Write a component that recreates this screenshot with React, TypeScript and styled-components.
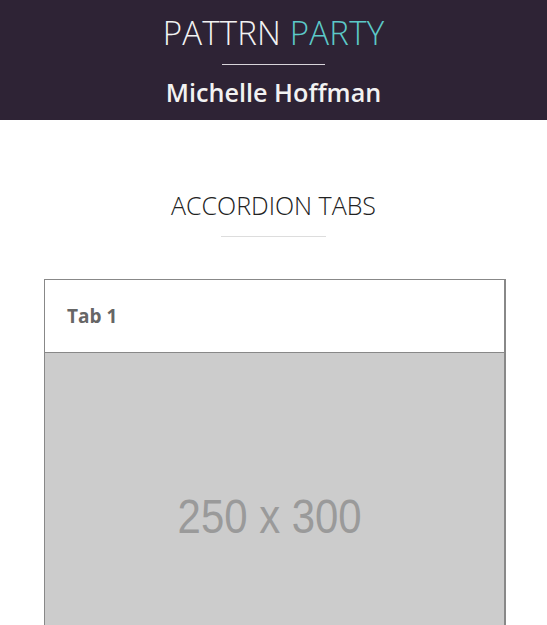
import React from "react";
import styled, { createGlobalStyle } from "styled-components";

const GlobalStyle = createGlobalStyle`
  html, body {
    margin: 0;
    padding: 0;
    background: #fff;
    font-family: "Open Sans", "Noto Sans", sans-serif;
  }
`;

const Header = styled.header`
  background: #2e2335;
  height: 120px;
  display: flex;
  flex-direction: column;
  align-items: center;
  box-sizing: border-box;
  padding-top: 11px;
`;

const SiteTitle = styled.h1`
  margin: 0;
  font-weight: 300;
  font-size: 33px;
  line-height: 44px;
  color: #f2f2f2;
  letter-spacing: 0.2px;

  span {
    color: #5cc9c8;
  }
`;

const Rule = styled.hr<{ $color: string; $width: number; $gap: number }>`
  border: 0;
  height: 1px;
  background: ${({ $color }) => $color};
  width: ${({ $width }) => $width}px;
  margin: ${({ $gap }) => $gap}px 0 0;
`;

const Author = styled.h2`
  margin: 11px 0 0;
  font-weight: 600;
  font-size: 25.2px;
  line-height: 32px;
  color: #f2f2f2;
`;

const Main = styled.main`
  display: flex;
  flex-direction: column;
  align-items: center;
  padding-top: 68px;
`;

const SectionTitle = styled.h3`
  margin: 0;
  font-weight: 300;
  font-size: 25px;
  line-height: 34px;
  color: #222;
`;

const Accordion = styled.div`
  align-self: flex-start;
  margin: 42px 0 0 44px;
  width: 462px;
  border: 1px solid #888;
  border-right-width: 2px;
  box-sizing: border-box;
`;

const TabHeader = styled.div`
  height: 72px;
  display: flex;
  align-items: center;
  padding-left: 22px;
  border-bottom: 1px solid #888;
  font-weight: 700;
  font-size: 19px;
  color: #666;
`;

const Placeholder = styled.div`
  height: 330px;
  background: #cccccc;
  display: flex;
  justify-content: center;
  padding: 139px 10px 0 0;
  box-sizing: border-box;
`;

const PlaceholderText = styled.span`
  font-family: "Liberation Sans", Arial, sans-serif;
  font-size: 49px;
  line-height: 49px;
  color: #9a9a9a;
  transform: scaleX(0.855);
  white-space: nowrap;
  height: 49px;
`;

export default function App() {
  return (
    <>
      <GlobalStyle />
      <Header>
        <SiteTitle>
          PATTRN <span>PARTY</span>
        </SiteTitle>
        <Rule $color="#d8d4da" $width={103} $gap={9} />
        <Author>Michelle Hoffman</Author>
      </Header>
      <Main>
        <SectionTitle>ACCORDION TABS</SectionTitle>
        <Rule $color="#ddd" $width={105} $gap={14} />
        <Accordion>
          <TabHeader>Tab 1</TabHeader>
          <Placeholder>
            <PlaceholderText>250 x 300</PlaceholderText>
          </Placeholder>
        </Accordion>
      </Main>
    </>
  );
}
